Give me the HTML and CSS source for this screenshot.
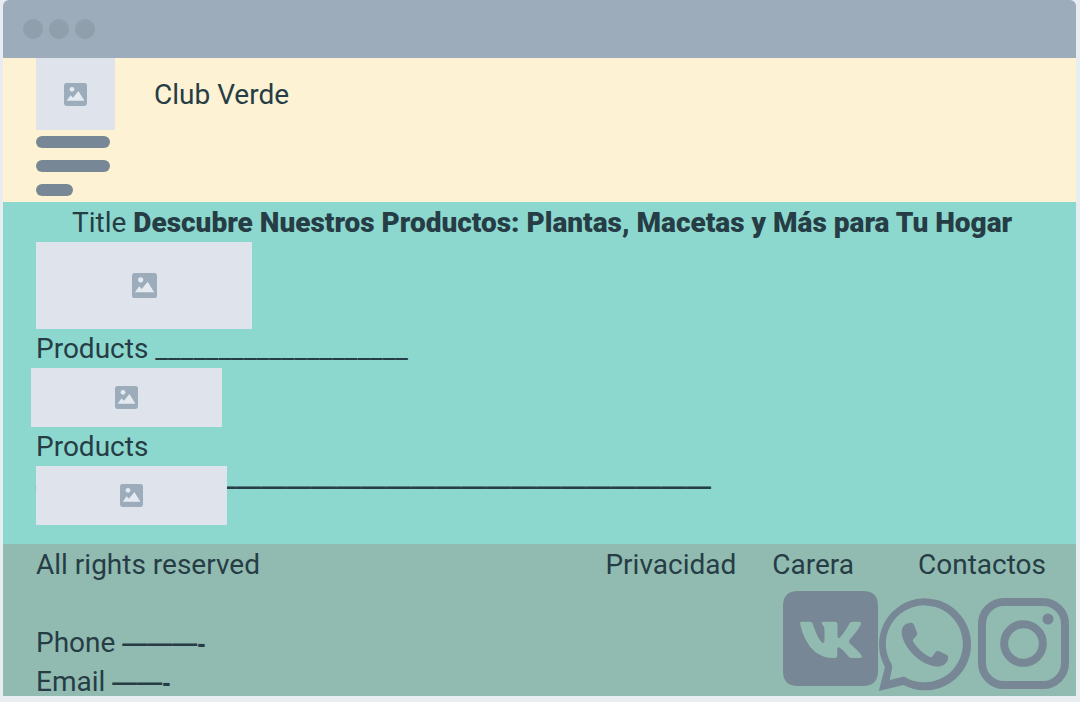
FILE: index.html
```html
<!DOCTYPE html>
<html lang="es">
<head>
<meta charset="utf-8">
<meta name="viewport" content="width=device-width, initial-scale=1">
<title>Club Verde</title>
<link rel="stylesheet" href="styles.css">
</head>
<body>
<svg class="defs" aria-hidden="true">
  <symbol id="picture" viewBox="0 0 23 23">
    <rect class="picture-frame" width="23" height="23" rx="2.4"/>
    <circle class="picture-detail" cx="8" cy="6.3" r="2.4"/>
    <path class="picture-detail" d="M2.7 17.8 6.6 12.2 9 14.8 14.4 8 20.4 17.8Z"/>
  </symbol>
</svg>
<div class="window">
  <div class="titlebar"><span class="dot"></span><span class="dot"></span><span class="dot"></span></div>
  <header class="header">
    <div class="brand">
      <div class="placeholder logo"><svg class="picture"><use href="#picture"/></svg></div>
      <span>Club Verde</span>
    </div>
    <button class="menu" type="button" aria-label="Menu">
      <span class="bar"></span><span class="bar"></span><span class="bar bar-short"></span>
    </button>
  </header>
  <main class="main">
    <h1 class="title">Title <strong>Descubre Nuestros Productos: Plantas, Macetas y Más para Tu Hogar</strong></h1>
    <div class="placeholder hero"><svg class="picture picture-large"><use href="#picture"/></svg></div>
    <p>Products ____________________</p>
    <div class="placeholder product outset"><svg class="picture"><use href="#picture"/></svg></div>
    <p>Products</p>
    <div class="stack">
      <p><span class="dashes">———————————————————————————</span></p>
      <div class="placeholder product"><svg class="picture"><use href="#picture"/></svg></div>
    </div>
  </main>
  <footer class="footer">
    <div class="contact">
      <p class="rights">All rights reserved</p>
      <p>Phone <span class="dashes">———-</span></p>
      <p>Email <span class="dashes">——-</span></p>
    </div>
    <div class="aside">
      <nav class="links">
        <a href="#privacidad">Privacidad</a>
        <a href="#carera">Carera</a>
        <a class="last" href="#contactos">Contactos</a>
      </nav>
      <div class="social">
        <a href="#vk" aria-label="VK"><svg class="vk" viewBox="0 0 95 95"><path fill-rule="evenodd" d="M15 0H80Q95 0 95 15V80Q95 95 80 95H15Q0 95 0 80V15Q0 0 15 0ZM19 30.7H27Q29 30.7 29.8 33C32 40 36 49 39 51.5Q41.5 53 41.5 49V39C41.3 35 40 34.5 39 33Q38 30.7 40.5 30.7H52Q54.5 30.7 54.5 33.5V45.5Q54.8 48 57 46.5C61 42 64 37 66.5 32.2Q67.2 30.7 69 30.7H76.5Q79 30.7 77.5 34C75 39 70 45 66.2 49.3Q65.5 50.5 66.5 52C70 55.5 76 60.5 78.6 64.5Q79.8 67 76.5 67H69Q67 67 65.5 65.5C62.5 62 59 57.5 55.8 56.2Q54.2 55.8 54.2 58V64.5Q54.2 67 51.5 67C33 67.5 22 54 17.2 33Q16.8 30.7 19 30.7Z"/></svg></a>
        <a href="#whatsapp" aria-label="WhatsApp"><svg class="whatsapp" viewBox="0 0 93 93"><path fill-rule="evenodd" d="M7 69A46 46 0 1 1 25.5 87L.8 93ZM13.5 66L14.3 69.3 11.7 82 26 78.5 28.5 80A38.5 38.5 0 1 0 13.5 66Z"/><path d="M23.7 34C23.7 28 28 24.5 33.2 24.7Q35 24.8 35.8 26.5L39 34.5Q39.8 36.2 38.6 37.6L35.3 41.2Q34.3 42.3 35.2 43.8C39.5 50.5 45 55.8 51.8 59.1Q53.3 59.8 54.3 58.5L57.7 54Q58.8 52.4 60.6 53.1L69 57.1Q70.5 57.9 70.3 60C69.5 65.5 64.5 69 58 68.5C41 66.5 24 48 23.7 34Z"/></svg></a>
        <a href="#instagram" aria-label="Instagram"><svg class="instagram" viewBox="0 0 91 91"><rect class="outline" x="4" y="4" width="83" height="83" rx="22"/><circle class="outline" cx="45.5" cy="45.5" r="19.3"/><circle cx="70" cy="21" r="5.5"/></svg></a>
      </div>
    </div>
  </footer>
</div>
</body>
</html>
```
FILE: styles.css
```css
* {
  box-sizing: border-box;
}

body {
  margin: 0;
  background: #e7edf0;
  color: #263d46;
  font: 28px/39px Roboto, "Liberation Sans", sans-serif;
}

p,
h1 {
  margin: 0;
}

svg {
  display: block;
}

.defs {
  position: absolute;
  width: 0;
  height: 0;
}

.window {
  margin: 0 4px 6px 3px;
}

.titlebar {
  display: flex;
  align-items: center;
  gap: 6px;
  height: 58px;
  padding-left: 20px;
  border-radius: 6px 6px 0 0;
  background: #9dacba;
}

.dot {
  width: 20px;
  height: 20px;
  border-radius: 50%;
  background: #8f9fac;
}

.header {
  padding: 0 33px 6px;
  background: #fdf2d3;
}

.brand {
  display: flex;
  align-items: center;
  gap: 39px;
}

.placeholder {
  display: flex;
  align-items: center;
  justify-content: center;
  background: #dfe4ec;
}

.logo {
  width: 79px;
  height: 72px;
}

.picture {
  width: 23px;
  height: 23px;
}

.picture-large {
  width: 25px;
  height: 25px;
}

.picture-frame {
  fill: #9dacba;
}

.picture-detail {
  fill: #e3eaf2;
}

.menu {
  display: flex;
  flex-direction: column;
  gap: 12px;
  margin-top: 6px;
  padding: 0;
  border: 0;
  background: none;
}

.bar {
  width: 74px;
  height: 12px;
  border-radius: 6px;
  background: #778795;
}

.bar-short {
  width: 37px;
}

.main {
  padding: 1px 33px 19px;
  background: #8dd8ce;
}

.title {
  padding-left: 36px;
  font-size: 28px;
  font-weight: 400;
}

.title strong {
  font-weight: 900;
}

.hero {
  width: 216px;
  height: 87px;
}

.product {
  width: 191px;
  height: 59px;
}

.outset {
  margin-left: -5px;
}

.stack {
  display: grid;
}

.stack > * {
  grid-area: 1 / 1;
}

.dashes {
  font: bold 25px/1 "Liberation Sans", sans-serif;
}

.footer {
  display: flex;
  justify-content: space-between;
  padding: 1px 0 0 33px;
  background: #91bbb1;
}

.contact {
  margin-bottom: -5px;
}

.rights {
  margin-bottom: 39px;
}

.links {
  display: flex;
  gap: 36px;
  padding-right: 30px;
}

.links a {
  color: inherit;
  text-decoration: none;
}

.last {
  margin-left: 28px;
}

.social {
  display: flex;
  justify-content: flex-end;
  align-items: flex-end;
  margin-top: 7px;
  padding-right: 7px;
  fill: #778795;
}

.vk {
  width: 95px;
  height: 95px;
  margin-bottom: 5px;
}

.whatsapp {
  width: 93px;
  height: 93px;
}

.instagram {
  width: 91px;
  height: 91px;
  margin: 0 0 2px 7px;
}

.outline {
  fill: none;
  stroke: #778795;
  stroke-width: 8px;
}
```
